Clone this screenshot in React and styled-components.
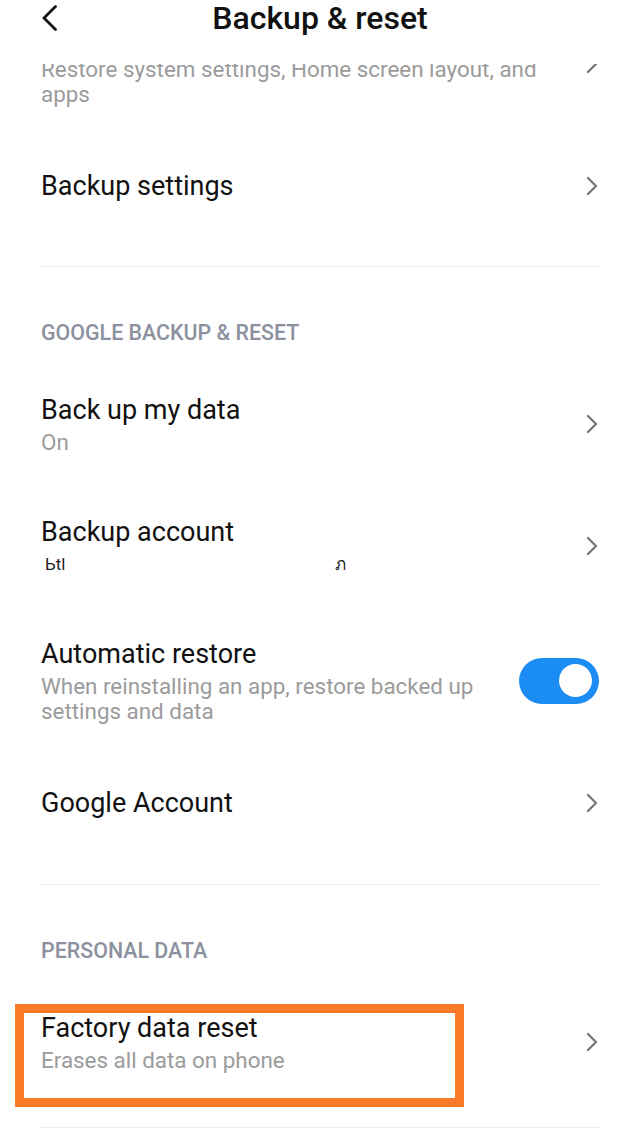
import React from "react";
import styled, { createGlobalStyle } from "styled-components";

const Global = createGlobalStyle`
  html, body { margin: 0; padding: 0; background: #fff; }
  body { font-family: Roboto, "Noto Sans", "Liberation Sans", sans-serif; -webkit-font-smoothing: antialiased; }
  * { box-sizing: border-box; }
`;

const Page = styled.div`
  width: 640px;
  height: 1131px;
  display: flex;
  flex-direction: column;
  overflow: hidden;
  background: #fff;
`;

const Header = styled.header`
  height: 64px;
  flex: none;
  display: grid;
  grid-template-columns: 80px 1fr 80px;
  align-items: start;
  background: #fff;
  position: relative;
  z-index: 2;
`;

const BackButton = styled.button`
  border: none;
  background: none;
  padding: 0;
  margin: 4px 0 0 40px;
  width: 20px;
  height: 28px;
  display: flex;
  align-items: center;
  justify-content: center;
  color: #111;
`;

const Title = styled.h1`
  margin: 0;
  text-align: center;
  font-size: 32px;
  line-height: 37px;
  font-weight: 500;
  color: #111;
`;

const Viewport = styled.main`
  flex: 1;
  overflow: hidden;
`;

const Scroll = styled.div`
  margin-top: ${(p) => p.$offset}px;
`;

const Row = styled.div`
  position: relative;
  display: flex;
  align-items: center;
  padding: ${(p) => p.$top || 30}px 41px ${(p) => p.$bottom || 30}px;
  gap: 20px;
`;

const Texts = styled.div`
  flex: 1;
  min-width: 0;
`;

const ItemTitle = styled.div`
  font-size: 27px;
  line-height: 34px;
  color: #111;
`;

const ItemSub = styled.div`
  margin-top: 3px;
  font-size: 22.4px;
  line-height: 25px;
  color: #9b9b9b;
  max-width: ${(p) => p.$max || "none"};
`;

const Redacted = styled.div`
  margin-top: 3px;
  height: 25px;
  display: flex;
  align-items: center;
  font-size: 17px;
  line-height: 17px;
  color: #222;
  gap: 270px;
  padding-left: 4px;
`;

const Chevron = styled.svg`
  flex: none;
  width: 14px;
  height: 20px;
  color: #7a7a7a;
`;

const Divider = styled.hr`
  margin: ${(p) => p.$top}px 41px 0;
  border: none;
  height: 1px;
  background: #ececec;
`;

const SectionHeader = styled.div`
  margin-top: 54px;
  padding: 0 41px 18px;
  font-size: 21.4px;
  line-height: 24px;
  font-weight: 500;
  color: #8c91a0;
`;

const Switch = styled.div`
  flex: none;
  width: 80px;
  height: 46px;
  border-radius: 23px;
  background: #1a8cf4;
  display: flex;
  align-items: center;
  justify-content: flex-end;
  padding-right: 7px;
`;

const Knob = styled.div`
  width: 33px;
  height: 33px;
  border-radius: 50%;
  background: #fff;
`;

const Highlight = styled.div`
  position: absolute;
  left: 15px;
  top: 23px;
  width: 449px;
  height: 103px;
  border: 9px solid #fb7a2a;
  pointer-events: none;
`;

const ChevronIcon = () => (
  <Chevron viewBox="0 0 14 20">
    <path d="M3 2 L11 10 L3 18" fill="none" stroke="currentColor" strokeWidth="2.4" strokeLinecap="round" strokeLinejoin="round" />
  </Chevron>
);

const Item = ({ title, sub, subMax, children, chevron = true, highlight, top, bottom }) => (
  <Row $top={top} $bottom={bottom}>
    <Texts>
      <ItemTitle>{title}</ItemTitle>
      {sub && <ItemSub $max={subMax}>{sub}</ItemSub>}
      {children}
    </Texts>
    {chevron && <ChevronIcon />}
    {highlight && <Highlight />}
  </Row>
);

export default function App() {
  return (
    <>
      <Global />
      <Page>
        <Header>
          <BackButton aria-label="Back">
            <svg width="16" height="26" viewBox="0 0 16 26">
              <path d="M13.5 1.5 L2 13 L13.5 24.5" fill="none" stroke="currentColor" strokeWidth="2.8" strokeLinecap="round" strokeLinejoin="round" />
            </svg>
          </BackButton>
          <Title>Backup &amp; reset</Title>
          <div />
        </Header>
        <Viewport>
          <Scroll $offset={-74}>
            <Item
              title="Reset app preferences"
              sub="Restore system settings, Home screen layout, and apps"
              subMax="505px"
              bottom={32}
            />
            <Item title="Backup settings" bottom={28} />
            <Divider $top={35} />
            <SectionHeader>GOOGLE BACKUP &amp; RESET</SectionHeader>
            <Item title="Back up my data" sub="On" />
            <Item title="Backup account">
              <Redacted>
                <span>Ьtl</span>
                <span>ภ</span>
              </Redacted>
            </Item>
            <Row>
              <Texts>
                <ItemTitle>Automatic restore</ItemTitle>
                <ItemSub $max="450px">When reinstalling an app, restore backed up settings and data</ItemSub>
              </Texts>
              <Switch>
                <Knob />
              </Switch>
            </Row>
            <Item title="Google Account" top={32} bottom={28} />
            <Divider $top={36} />
            <SectionHeader>PERSONAL DATA</SectionHeader>
            <Item title="Factory data reset" sub="Erases all data on phone" highlight />
            <Divider $top={24} />
          </Scroll>
        </Viewport>
      </Page>
    </>
  );
}
